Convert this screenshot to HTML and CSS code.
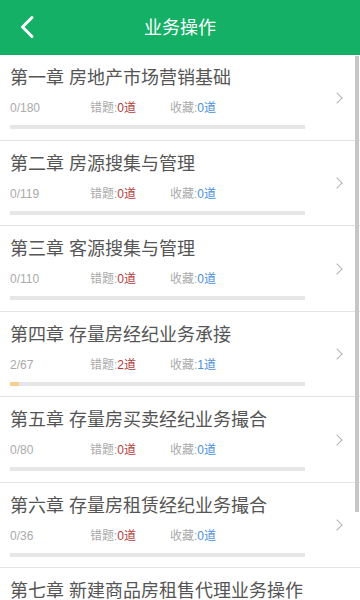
FILE: index.html
```html
<!DOCTYPE html>
<html>
<head>
    <meta charset="UTF-8" />
    <title>业务操作</title>
    <link rel="stylesheet" href="styles.css">
</head>
<body>
    <div class="header">
        <a class="back" href="#">
            <svg width="16" height="24" viewBox="0 0 16 24"><polyline points="13,2.5 3.5,12 13,21.5" fill="none" stroke="#fff" stroke-width="3" stroke-linecap="round" stroke-linejoin="round"/></svg>
        </a>
        <span class="title">业务操作</span>
    </div>
    <div class="list">
        <div class="row">
            <div class="info">
                <div class="name">第一章 房地产市场营销基础</div>
                <div class="meta"><span class="num">0/180</span><span class="err">错题:<em>0道</em></span><span class="fav">收藏:<em>0道</em></span></div>
                <div class="bar"><i style="width:0%"></i></div>
            </div>
            <span class="arrow"></span>
        </div>
        <div class="row">
            <div class="info">
                <div class="name">第二章 房源搜集与管理</div>
                <div class="meta"><span class="num">0/119</span><span class="err">错题:<em>0道</em></span><span class="fav">收藏:<em>0道</em></span></div>
                <div class="bar"><i style="width:0%"></i></div>
            </div>
            <span class="arrow"></span>
        </div>
        <div class="row">
            <div class="info">
                <div class="name">第三章 客源搜集与管理</div>
                <div class="meta"><span class="num">0/110</span><span class="err">错题:<em>0道</em></span><span class="fav">收藏:<em>0道</em></span></div>
                <div class="bar"><i style="width:0%"></i></div>
            </div>
            <span class="arrow"></span>
        </div>
        <div class="row">
            <div class="info">
                <div class="name">第四章 存量房经纪业务承接</div>
                <div class="meta"><span class="num">2/67</span><span class="err">错题:<em>2道</em></span><span class="fav">收藏:<em>1道</em></span></div>
                <div class="bar"><i style="width:3%"></i></div>
            </div>
            <span class="arrow"></span>
        </div>
        <div class="row">
            <div class="info">
                <div class="name">第五章 存量房买卖经纪业务撮合</div>
                <div class="meta"><span class="num">0/80</span><span class="err">错题:<em>0道</em></span><span class="fav">收藏:<em>0道</em></span></div>
                <div class="bar"><i style="width:0%"></i></div>
            </div>
            <span class="arrow"></span>
        </div>
        <div class="row">
            <div class="info">
                <div class="name">第六章 存量房租赁经纪业务撮合</div>
                <div class="meta"><span class="num">0/36</span><span class="err">错题:<em>0道</em></span><span class="fav">收藏:<em>0道</em></span></div>
                <div class="bar"><i style="width:0%"></i></div>
            </div>
            <span class="arrow"></span>
        </div>
        <div class="row">
            <div class="info">
                <div class="name">第七章 新建商品房租售代理业务操作</div>
                <div class="meta"><span class="num">0/52</span><span class="err">错题:<em>0道</em></span><span class="fav">收藏:<em>0道</em></span></div>
                <div class="bar"><i style="width:0%"></i></div>
            </div>
            <span class="arrow"></span>
        </div>
    </div>
    <div class="scroll"></div>
</body>
</html>
```

FILE: styles.css
```css
* {
    margin: 0;
    padding: 0;
}
html, body {
    height: 100%;
    overflow: hidden;
}
body {
    background-color: #fff;
    font-family: "Liberation Sans", "Noto Sans CJK SC", sans-serif;
    position: relative;
}

.header {
    height: 55px;
    background-color: #13b065;
    display: flex;
    align-items: center;
    justify-content: center;
    position: relative;
}
.back {
    position: absolute;          /* 返回按钮压在标题栏左边 */
    left: 19px;
    top: 15px;
    width: 16px;
    height: 24px;
}
.back svg {
    display: block;
}
.title {
    color: #fff;
    font-size: 18px;
    line-height: 24px;
}

.row {
    display: flex;
    align-items: center;
    padding: 11px 0 10.5px 10px;
    border-bottom: 1px solid #e3e3e3;
}
.info {
    width: 295px;
}
.name {
    font-size: 18px;
    line-height: 24px;
    color: #555;
    white-space: nowrap;
}
.meta {
    display: flex;
    margin-top: 10px;
    font-size: 12px;
    line-height: 16px;
    color: #aaa;
}
.meta em {
    font-style: normal;
}
.num {
    width: 80px;
}
.err {
    width: 80px;
}
.err em {
    color: #b23a3a;
}
.fav em {
    color: #4a8fdb;
}
.bar {
    margin-top: 9px;
    height: 4px;
    background-color: #e6e6e6;
}
.bar i {
    display: block;
    height: 4px;
    background-color: #f8cd8f;
}
.arrow {
    width: 7px;
    height: 7px;
    border-top: 1px solid #b5b5b5;
    border-right: 1px solid #b5b5b5;
    transform: rotate(45deg);
    margin-left: 28px;
}

.scroll {
    position: absolute;          /* 模拟滚动条 */
    right: 1px;
    top: 56px;
    width: 4px;
    height: 456px;
    background-color: #c6c6c6;
}
```
